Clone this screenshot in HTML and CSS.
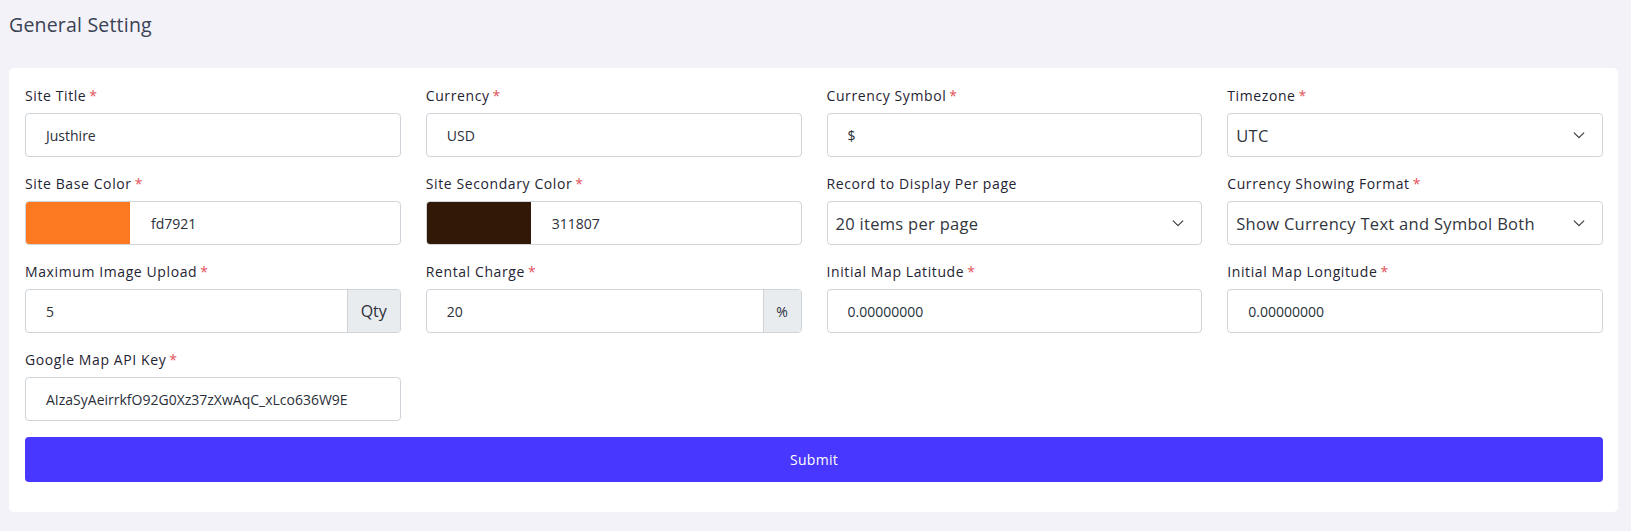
FILE: index.html
```html
<!DOCTYPE html>
<html lang="en">
<head>
<meta charset="utf-8">
<title>General Setting</title>
<link rel="stylesheet" href="styles.css">
</head>
<body>
<div class="page">
  <h1 class="page-title">General Setting</h1>
  <div class="card">
    <form class="grid">
      <div class="field">
        <label class="label">Site Title<span class="req">*</span></label>
        <div class="input"><span class="val">Justhire</span></div>
      </div>
      <div class="field">
        <label class="label">Currency<span class="req">*</span></label>
        <div class="input"><span class="val">USD</span></div>
      </div>
      <div class="field">
        <label class="label">Currency Symbol<span class="req">*</span></label>
        <div class="input"><span class="val">$</span></div>
      </div>
      <div class="field">
        <label class="label">Timezone<span class="req">*</span></label>
        <div class="input select"><span class="sel">UTC</span>
          <svg class="chev" viewBox="0 0 16 16" width="16" height="16"><path d="M2.5 5.5 8 11l5.5-5.5" fill="none" stroke="#343a40" stroke-width="1.3" stroke-linecap="round" stroke-linejoin="round"/></svg>
        </div>
      </div>

      <div class="field">
        <label class="label">Site Base Color<span class="req">*</span></label>
        <div class="input color"><span class="swatch swatch-orange"></span><span class="val">fd7921</span></div>
      </div>
      <div class="field">
        <label class="label">Site Secondary Color<span class="req">*</span></label>
        <div class="input color"><span class="swatch swatch-brown"></span><span class="val">311807</span></div>
      </div>
      <div class="field">
        <label class="label">Record to Display Per page</label>
        <div class="input select"><span class="sel">20 items per page</span>
          <svg class="chev" viewBox="0 0 16 16" width="16" height="16"><path d="M2.5 5.5 8 11l5.5-5.5" fill="none" stroke="#343a40" stroke-width="1.3" stroke-linecap="round" stroke-linejoin="round"/></svg>
        </div>
      </div>
      <div class="field">
        <label class="label">Currency Showing Format<span class="req">*</span></label>
        <div class="input select"><span class="sel">Show Currency Text and Symbol Both</span>
          <svg class="chev" viewBox="0 0 16 16" width="16" height="16"><path d="M2.5 5.5 8 11l5.5-5.5" fill="none" stroke="#343a40" stroke-width="1.3" stroke-linecap="round" stroke-linejoin="round"/></svg>
        </div>
      </div>

      <div class="field">
        <label class="label">Maximum Image Upload<span class="req">*</span></label>
        <div class="input group"><span class="val grow">5</span><span class="addon addon-qty">Qty</span></div>
      </div>
      <div class="field">
        <label class="label">Rental Charge<span class="req">*</span></label>
        <div class="input group"><span class="val grow">20</span><span class="addon addon-pct">%</span></div>
      </div>
      <div class="field">
        <label class="label">Initial Map Latitude<span class="req">*</span></label>
        <div class="input"><span class="val">0.00000000</span></div>
      </div>
      <div class="field">
        <label class="label">Initial Map Longitude<span class="req">*</span></label>
        <div class="input"><span class="val">0.00000000</span></div>
      </div>

      <div class="field">
        <label class="label">Google Map API Key<span class="req">*</span></label>
        <div class="input"><span class="val">AIzaSyAeirrkfO92G0Xz37zXwAqC_xLco636W9E</span></div>
      </div>

      <button type="button" class="submit">Submit</button>
    </form>
  </div>
</div>
</body>
</html>
```

FILE: styles.css
```css
* { box-sizing: border-box; }
html, body { margin: 0; padding: 0; }
body {
  background: #f3f2f8;
  font-family: "Open Sans", "Noto Sans", sans-serif;
  color: #212529;
  width: 1631px;
  height: 531px;
  overflow: hidden;
}
.page {
  padding: 13px 13px 0 9px;
}
.page-title {
  margin: 0 0 31px 0;
  font-size: 19.5px;
  font-weight: 500;
  line-height: 24px;
  color: #3a4254;
  letter-spacing: 0.2px;
}
.card {
  background: #ffffff;
  border-radius: 5px;
  padding: 18px 15px 30px 16px;
}
.grid {
  display: grid;
  grid-template-columns: repeat(4, 1fr);
  column-gap: 25px;
  row-gap: 17px;
  margin: 0;
}
.field {
  display: flex;
  flex-direction: column;
}
.label {
  font-size: 14px;
  font-weight: 500;
  line-height: 20px;
  letter-spacing: 0.6px;
  color: #1f2433;
  margin-bottom: 7px;
}
.req {
  color: #e2525a;
  margin-left: 3px;
}
.input {
  height: 44px;
  border: 1px solid #ced4da;
  border-radius: 4px;
  display: flex;
  align-items: center;
  background: #fff;
  overflow: hidden;
}
.val {
  padding-left: 20px;
  font-size: 14px;
  color: #2b2f3a;
}
.grow { flex: 1; }
.select {
  justify-content: space-between;
  padding-right: 16px;
}
.sel {
  padding-left: 8px;
  font-size: 16.5px;
  letter-spacing: 0.3px;
  color: #32363d;
}
.chev { width: 14px; height: 14px; }
.color .val { padding-left: 21px; }
.swatch {
  width: 104px;
  height: 100%;
  flex: none;
}
.swatch-orange { background: #fd7921; }
.swatch-brown { background: #311807; }
.addon {
  height: 100%;
  display: flex;
  align-items: center;
  justify-content: center;
  background: #e9ecef;
  border-left: 1px solid #ced4da;
  color: #2b2f3a;
  flex: none;
}
.addon-qty { width: 53px; font-size: 16px; }
.addon-pct { width: 38px; font-size: 14px; }
.submit {
  grid-column: 1 / -1;
  margin-top: -1px;
  height: 45px;
  border: none;
  border-radius: 4px;
  background: #4837ff;
  color: #fff;
  font-family: "Open Sans", "Noto Sans", sans-serif;
  font-size: 14px;
  font-weight: 500;
  letter-spacing: 0.3px;
  cursor: pointer;
}
```
